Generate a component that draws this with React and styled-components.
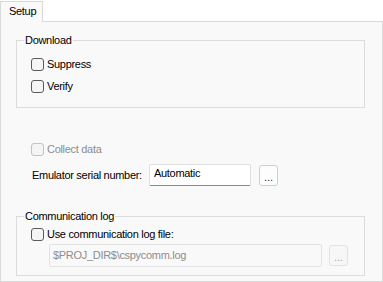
import React from "react";
import styled, { createGlobalStyle } from "styled-components";

const Global = createGlobalStyle`
  html, body {
    margin: 0;
    background: #ffffff;
  }
  body {
    font-family: "Liberation Sans", Arial, sans-serif;
    font-size: 11px;
    letter-spacing: -0.3px;
    color: #000000;
  }
`;

const Check = ({ label, disabled }) => (
  <CheckRow $disabled={disabled}>
    <Box $disabled={disabled} />
    <span>{label}</span>
  </CheckRow>
);

const App = () => {
  return (
    <>
      <Global />
      <Container>
        <TabStrip>
          <Tab>Setup</Tab>
          <TabRest />
        </TabStrip>
        <Panel>
          <Group>
            <Legend>Download</Legend>
            <GroupBody $top={6} $bottom={10}>
              <Check label="Suppress" />
              <Check label="Verify" />
            </GroupBody>
          </Group>

          <Middle>
            <Check label="Collect data" disabled />
            <FieldRow>
              <FieldLabel>Emulator serial number:</FieldLabel>
              <TextInput defaultValue="Automatic" />
              <Browse>...</Browse>
            </FieldRow>
          </Middle>

          <Group>
            <Legend>Communication log</Legend>
            <GroupBody $top={0} $bottom={8}>
              <Check label="Use communication log file:" />
              <PathRow>
                <PathInput disabled defaultValue="$PROJ_DIR$\cspycomm.log" />
                <Browse $disabled>...</Browse>
              </PathRow>
            </GroupBody>
          </Group>
        </Panel>
      </Container>
    </>
  );
};

export default App;

const Container = styled.div`
  width: 383px;
  height: 282px;
  display: flex;
  flex-direction: column;
`;

const TabStrip = styled.div`
  display: flex;
  height: 21px;
  padding-top: 1px;
  box-sizing: border-box;
`;

const Tab = styled.div`
  width: 43px;
  box-sizing: border-box;
  border: 1px solid #d9d9d9;
  border-bottom: none;
  background: #f9f9f9;
  padding: 2px 0 0 8px;
  line-height: 14px;
  margin-bottom: -1px;
  position: relative;
  z-index: 1;
`;

const TabRest = styled.div`
  flex: 1;
`;

const Panel = styled.div`
  width: 383px;
  height: 261px;
  box-sizing: border-box;
  background: #f9f9f9;
  border: 1px solid #d9d9d9;
  padding: 11px 17px 0 15px;
  display: flex;
  flex-direction: column;
`;

const Group = styled.fieldset`
  margin: 0;
  padding: 0 0 0 7px;
  border: 1px solid #dcdcdc;
  min-width: 0;
`;

const Legend = styled.legend`
  padding: 0 1px;
  line-height: 14px;
  color: #000;
`;

const GroupBody = styled.div`
  display: flex;
  flex-direction: column;
  padding: ${(p) => p.$top}px 0 ${(p) => p.$bottom}px 7px;
`;

const CheckRow = styled.label`
  display: flex;
  align-items: center;
  gap: 3px;
  height: 22px;
  color: ${(p) => (p.$disabled ? "#8d8d8d" : "#000")};
`;

const Box = styled.span`
  width: 13px;
  height: 13px;
  box-sizing: border-box;
  border: 1px solid ${(p) => (p.$disabled ? "#c2c2c2" : "#5a5a5a")};
  border-radius: 3px;
  background: ${(p) => (p.$disabled ? "#f4f4f4" : "#f5f5f5")};
`;

const Middle = styled.div`
  display: flex;
  flex-direction: column;
  padding: 30px 0 0 15px;
  height: 101px;
  box-sizing: border-box;
`;

const FieldRow = styled.div`
  display: flex;
  align-items: center;
  margin-top: 4px;
`;

const FieldLabel = styled.span`
  width: 117px;
  padding-left: 1px;
`;

const TextInput = styled.input`
  width: 102px;
  height: 22px;
  box-sizing: border-box;
  border: 1px solid #e0e0e0;
  border-bottom: 1px solid #8a8a8a;
  border-radius: 2px;
  background: #ffffff;
  font: inherit;
  letter-spacing: inherit;
  color: #000;
  padding: 0 4px 4px;
  outline: none;
`;

const Browse = styled.button`
  width: 19px;
  height: 21px;
  margin-left: ${(p) => (p.$disabled ? "7px" : "8px")};
  box-sizing: border-box;
  border: 1px solid ${(p) => (p.$disabled ? "#e3e3e3" : "#cfcfcf")};
  border-radius: 3px;
  background: ${(p) => (p.$disabled ? "#f7f7f7" : "#fdfdfd")};
  font: inherit;
  letter-spacing: 0;
  color: ${(p) => (p.$disabled ? "#a0a0a0" : "#2a2a2a")};
  padding: 0 0 2px;
  line-height: 1;
  display: flex;
  align-items: flex-end;
  justify-content: center;
`;

const PathRow = styled.div`
  display: flex;
  align-items: center;
  padding-left: 18px;
  margin-top: -1px;
`;

const PathInput = styled.input`
  width: 273px;
  height: 23px;
  box-sizing: border-box;
  border: 1px solid #e3e3e3;
  border-radius: 2px;
  background: #f9f9f9;
  font: inherit;
  letter-spacing: inherit;
  color: #8d8d8d;
  padding: 0 0 2px 3px;
  outline: none;
`;
